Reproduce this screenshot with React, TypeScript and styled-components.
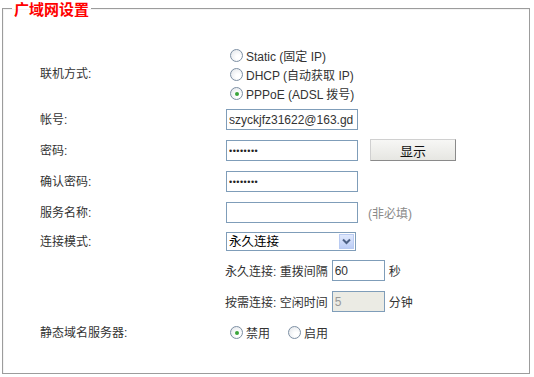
import React, { useState } from "react";
import styled, { createGlobalStyle } from "styled-components";

const FONT = `"Liberation Sans", Arial, "Noto Sans CJK SC", sans-serif`;

const GlobalStyle = createGlobalStyle`
  html, body {
    margin: 0;
    padding: 0;
    background: #fff;
  }
  body {
    font-family: ${FONT};
    font-size: 12px;
    color: #333;
  }
`;

const Frame = styled.fieldset`
  width: 528px;
  height: 374px;
  box-sizing: border-box;
  margin: 0 0 0 2px;
  padding: 0;
  border: 1px solid #9c9c9c;
  box-shadow: inset 1px 1px 0 #f4f4f4;
`;

const Legend = styled.legend`
  margin-left: 9px;
  padding: 0 2px;
  font-family: "Noto Sans CJK SC", sans-serif;
  font-size: 15px;
  line-height: 17px;
  font-weight: 700;
  color: #f00;
`;

const Form = styled.div`
  display: grid;
  grid-template-columns: 223px 1fr;
  grid-template-rows: 60px 31px 31px 31px 31px 27px 31px 31px 31px;
  align-items: center;
  padding-top: 27px;
`;

const Label = styled.div`
  padding-left: 37px;
  line-height: 14px;
  color: #333;
`;

const Cell = styled.div`
  display: flex;
  align-items: center;
  gap: 6px;
`;

const RadioList = styled.div`
  display: flex;
  flex-direction: column;
  padding-top: 1px;
`;

const RadioItem = styled.label<{ $gap?: number }>`
  display: inline-flex;
  align-items: center;
  height: 19px;
  gap: 3px;
  margin-left: 4px;
  margin-right: ${(p) => p.$gap ?? 0}px;
  cursor: default;
  color: #333;
  white-space: nowrap;
`;

const RadioDot = styled.span<{ $on?: boolean }>`
  width: 11px;
  height: 11px;
  border-radius: 50%;
  border: 1px solid #7d8fa3;
  background: radial-gradient(circle at 65% 65%, #ffffff 20%, #dfe3e8 100%);
  display: inline-flex;
  align-items: center;
  justify-content: center;
  flex: none;
  &::after {
    content: "";
    width: 4px;
    height: 4px;
    border-radius: 50%;
    background: ${(p) => (p.$on ? "#3aa43a" : "transparent")};
  }
`;

const TextBox = styled.input<{ $w?: number }>`
  box-sizing: border-box;
  width: ${(p) => p.$w ?? 132}px;
  height: 21px;
  margin: 0;
  padding: 0 2px;
  border: 1px solid #7f9db9;
  font-family: ${FONT};
  font-size: 12px;
  color: #333;
  background: #fff;
  outline: none;
  &[type="password"] {
    font-size: 9px;
    letter-spacing: 0.5px;
    color: #222;
  }
  &:disabled {
    background: #ebebe4;
    color: #999;
  }
`;

const Button = styled.button`
  box-sizing: border-box;
  width: 86px;
  height: 22px;
  margin: -1px 0 0 6px;
  padding: 0;
  border: 1px solid #d0d0d0;
  border-right-color: #8a8a8a;
  border-bottom-color: #8a8a8a;
  background: linear-gradient(#f7f7f5, #e6e6e2);
  font-family: "Noto Sans CJK SC", sans-serif;
  font-size: 13px;
  color: #111;
`;

const Hint = styled.span`
  margin-left: 4px;
  color: #8a8a8a;
`;

const Unit = styled.span`
  color: #333;
`;

const SelectWrap = styled.div`
  position: relative;
  width: 130px;
  height: 19px;
`;

const Select = styled.select`
  appearance: none;
  box-sizing: border-box;
  width: 100%;
  height: 100%;
  margin: 0;
  padding: 0 0 0 2px;
  border: 1px solid #7f9db9;
  border-radius: 0;
  background: #fff;
  font-family: ${FONT};
  font-size: 12.5px;
  color: #000;
  outline: none;
`;

const SelectArrow = styled.span`
  position: absolute;
  top: 2px;
  right: 2px;
  width: 15px;
  height: 15px;
  box-sizing: border-box;
  border: 1px solid #b9cbf2;
  background: linear-gradient(#e0e9fd, #bccdf6);
  display: flex;
  align-items: center;
  justify-content: center;
  pointer-events: none;
`;

const Line = styled.div`
  display: flex;
  align-items: center;
  gap: 4px;
  margin-left: -1px;
`;

function Radio({ on, text, gap, onPick }: { on: boolean; text: string; gap?: number; onPick: () => void }) {
  return (
    <RadioItem $gap={gap} onClick={onPick}>
      <RadioDot $on={on} />
      {text}
    </RadioItem>
  );
}

const modes = ["Static (固定 IP)", "DHCP (自动获取 IP)", "PPPoE (ADSL 拨号)"];

export default function App() {
  const [mode, setMode] = useState(2);
  const [dns, setDns] = useState(0);
  const [user, setUser] = useState("szyckjfz31622@163.gd");
  const [showPw, setShowPw] = useState(false);

  return (
    <>
      <GlobalStyle />
      <Frame>
        <Legend>广域网设置</Legend>
        <Form>
          <Label>联机方式:</Label>
          <Cell>
            <RadioList>
              {modes.map((m, i) => (
                <Radio key={m} on={mode === i} text={m} onPick={() => setMode(i)} />
              ))}
            </RadioList>
          </Cell>

          <Label>帐号:</Label>
          <Cell>
            <TextBox value={user} onChange={(e) => setUser(e.target.value)} />
          </Cell>

          <Label>密码:</Label>
          <Cell>
            <TextBox type={showPw ? "text" : "password"} defaultValue="12345678" />
            <Button onClick={() => setShowPw(!showPw)}>显示</Button>
          </Cell>

          <Label>确认密码:</Label>
          <Cell>
            <TextBox type="password" defaultValue="12345678" />
          </Cell>

          <Label>服务名称:</Label>
          <Cell>
            <TextBox />
            <Hint>(非必填)</Hint>
          </Cell>

          <Label>连接模式:</Label>
          <Cell>
            <SelectWrap>
              <Select defaultValue="always">
                <option value="always">永久连接</option>
                <option value="demand">按需连接</option>
              </Select>
              <SelectArrow>
                <svg width="9" height="7" viewBox="0 0 9 7">
                  <path d="M1 1.5 L4.5 5 L8 1.5" fill="none" stroke="#4d6185" strokeWidth="2" />
                </svg>
              </SelectArrow>
            </SelectWrap>
          </Cell>

          <div />
          <Line>
            永久连接: 重拨间隔
            <TextBox $w={53} defaultValue="60" />
            <Unit>秒</Unit>
          </Line>

          <div />
          <Line>
            按需连接: 空闲时间
            <TextBox $w={53} defaultValue="5" disabled />
            <Unit>分钟</Unit>
          </Line>

          <Label>静态域名服务器:</Label>
          <Cell>
            <Radio on={dns === 0} text="禁用" gap={8} onPick={() => setDns(0)} />
            <Radio on={dns === 1} text="启用" onPick={() => setDns(1)} />
          </Cell>
        </Form>
      </Frame>
    </>
  );
}
